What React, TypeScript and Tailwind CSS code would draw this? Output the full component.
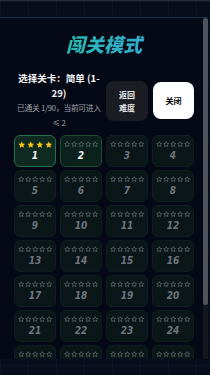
import React from 'react';

const levels = Array.from({ length: 29 }, (_, i) => i + 1);

function Star({ filled }: { filled: boolean }) {
  return (
    <svg viewBox="0 0 24 24" className={filled ? 'w-[7.5px] h-[7.5px]' : 'w-[6.5px] h-[6.5px]'}>
      <path
        d="M12 2.5l2.9 6.1 6.6.8-4.9 4.6 1.3 6.6L12 17.3l-5.9 3.3 1.3-6.6-4.9-4.6 6.6-.8z"
        fill={filled ? '#f7c71c' : 'none'}
        stroke={filled ? '#f7c71c' : '#525a5f'}
        strokeWidth={filled ? 1 : 3.5}
        strokeLinejoin="round"
      />
    </svg>
  );
}

function LevelCard({ n }: { n: number }) {
  const done = n === 1;
  const open = n <= 2;
  return (
    <div
      className={`h-[32px] rounded-[6px] border flex flex-col items-center justify-center ${
        done
          ? 'bg-[#0f2a21] border-[#23704a]'
          : open
          ? 'bg-[#0b211b] border-[#1b4b34]'
          : 'bg-[#0b1619] border-[#101c20]'
      }`}
    >
      <div className={`flex items-center ${done ? 'gap-[1.5px]' : 'gap-[0.5px]'}`}>
        {done
          ? [0, 1, 2, 3].map((i) => <Star key={i} filled />)
          : [0, 1, 2, 3, 4].map((i) => <Star key={i} filled={false} />)}
      </div>
      <span
        className={`mt-[2px] text-[10px] leading-[11px] italic font-bold font-['Liberation_Sans_Narrow','DejaVu_Sans_Condensed','Liberation_Sans',sans-serif] ${
          open ? 'text-[#f1f3f5]' : 'text-[#6f757d]'
        }`}
      >
        {n}
      </span>
    </div>
  );
}

export default function App() {
  return (
    <div className="relative h-[375px] w-full overflow-hidden border-t border-[#2a2f3a] bg-[#080d1b] bg-[linear-gradient(rgba(40,70,130,0.13)_1px,transparent_1px),linear-gradient(90deg,rgba(40,70,130,0.13)_1px,transparent_1px)] bg-[size:28px_28px] font-['Noto_Sans_CJK_SC','Noto_Sans',sans-serif]">
      <div className="absolute left-0 right-[2px] top-[16px] bottom-[16px] bg-[#050915] border-t border-[#16304d]">
        <div className="h-full overflow-y-auto [scrollbar-width:none]">
          <div className="pt-[14px] pb-[8px] pl-[14px] pr-[14px]">
            <h1 className="text-center text-[19px] leading-[24px] font-black italic bg-linear-to-r from-[#22c49a] to-[#3a9ee0] bg-clip-text text-transparent">
              闯关模式
            </h1>

            <div className="mt-[15px] flex items-center">
              <div className="flex-1 min-w-0 text-center">
                <div className="text-[9.5px] leading-[14.5px] font-bold text-[#f3f4f6] px-[3px]">
                  选择关卡：简单 (1-29)
                </div>
                <div className="text-[7.8px] leading-[15px] tracking-[-0.3px] whitespace-nowrap text-[#9ca1a8]">
                  已通关 1/90，当前可进入
                  <br />≤ 2
                </div>
              </div>
              <button className="ml-[2px] w-[42px] h-[40px] shrink-0 rounded-[8px] bg-[#1b1d23] text-[8px] leading-[13px] font-bold text-[#e5e7eb]">
                返回
                <br />
                难度
              </button>
              <button className="ml-[5px] w-[41px] h-[37px] shrink-0 rounded-[8px] bg-white text-[8px] font-bold text-black">
                关闭
              </button>
            </div>

            <div className="mt-[5px] grid grid-cols-4 gap-x-[4px] gap-y-[3px]">
              {levels.map((n) => (
                <LevelCard key={n} n={n} />
              ))}
            </div>
          </div>
        </div>
        {/* scrollbar */}
        <div className="absolute right-0 top-0 bottom-0 w-[5px] bg-[#141720]">
          <div className="h-[287px] rounded-full bg-[#4d525c]" />
        </div>
      </div>
    </div>
  );
}
